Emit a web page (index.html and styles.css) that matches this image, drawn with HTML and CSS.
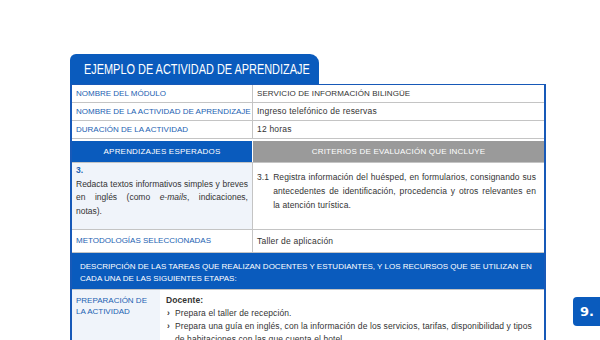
FILE: index.html
```html
<!DOCTYPE html>
<html lang="es">
<head>
<meta charset="utf-8">
<link rel="stylesheet" href="styles.css">
</head>
<body>
<div class="page">
  <div class="sheet">
    <div class="tab"><span class="tab-text">EJEMPLO DE ACTIVIDAD DE APRENDIZAJE</span></div>
    <div class="table">
      <div class="row two">
        <div class="cell label">NOMBRE DEL MÓDULO</div>
        <div class="cell value caps">SERVICIO DE INFORMACIÓN BILINGÜE</div>
      </div>
      <div class="row two">
        <div class="cell label">NOMBRE DE LA ACTIVIDAD DE APRENDIZAJE</div>
        <div class="cell value">Ingreso telefónico de reservas</div>
      </div>
      <div class="row two">
        <div class="cell label">DURACIÓN DE LA ACTIVIDAD</div>
        <div class="cell value">12 horas</div>
      </div>
      <div class="row two heads">
        <div class="cell head blue">APRENDIZAJES ESPERADOS</div>
        <div class="cell head gray">CRITERIOS DE EVALUACIÓN QUE INCLUYE</div>
      </div>
      <div class="row two">
        <div class="cell tint learn">
          <div class="num">3.</div>
          <p class="lines">
            <span class="jl">Redacta textos informativos simples y breves</span>
            <span class="jl">en inglés (como <em>e-mails</em>, indicaciones,</span>
            <span class="ll">notas).</span>
          </p>
        </div>
        <div class="cell crit">
          <span class="cnum">3.1</span>
          <p class="lines">
            <span class="jl">Registra información del huésped, en formularios, consignando sus</span>
            <span class="jl">antecedentes de identificación, procedencia y otros relevantes en</span>
            <span class="ll">la atención turística.</span>
          </p>
        </div>
      </div>
      <div class="row two meth">
        <div class="cell label">METODOLOGÍAS SELECCIONADAS</div>
        <div class="cell value">Taller de aplicación</div>
      </div>
      <div class="row desc">DESCRIPCIÓN DE LAS TAREAS QUE REALIZAN DOCENTES Y ESTUDIANTES, Y LOS RECURSOS QUE SE UTILIZAN EN CADA UNA DE LAS SIGUIENTES ETAPAS:</div>
      <div class="row prep">
        <div class="cell label tint plabel">PREPARACIÓN DE LA ACTIVIDAD</div>
        <div class="cell pbody">
          <div class="who">Docente:</div>
          <ul class="list">
            <li>Prepara el taller de recepción.</li>
            <li>Prepara una guía en inglés, con la información de los servicios, tarifas, disponibilidad y tipos de habitaciones con las que cuenta el hotel.</li>
          </ul>
        </div>
      </div>
    </div>
  </div>
  <div class="badge">9.</div>
</div>
</body>
</html>
```

FILE: styles.css
```css
html, body {
  margin: 0;
  padding: 0;
  background: #fff;
}
body {
  width: 600px;
  height: 340px;
  overflow: hidden;
  font-family: "Liberation Sans", Arial, sans-serif;
  color: #333;
}
.page {
  position: relative;
  width: 600px;
  height: 340px;
  padding: 54px 0 0 70px;
  box-sizing: border-box;
}
.sheet {
  width: 476px;
}
.tab {
  width: 249px;
  height: 30px;
  box-sizing: border-box;
  background: #0a5bbd;
  color: #fff;
  border-radius: 6px 9px 0 0;
  padding-left: 14px;
  white-space: nowrap;
  overflow: hidden;
}
.tab-text {
  display: inline-block;
  font-size: 14px;
  line-height: 30px;
  transform: scaleX(0.78);
  transform-origin: left center;
}
.table {
  border-left: 2px solid #1759b8;
  border-right: 2px solid #1759b8;
  border-top: 1px solid #1759b8;
}
.row {
  border-bottom: 1px solid #c4c4c4;
}
.two {
  display: grid;
  grid-template-columns: 180px 1fr;
}
.cell {
  font-size: 8.5px;
  padding: 0 4px;
  line-height: 17px;
  white-space: nowrap;
}
.label {
  color: #2362b2;
  font-size: 8px;
}
.value {
  border-left: 1px solid #c4c4c4;
  letter-spacing: 0.2px;
}
.value.caps {
  font-size: 8px;
  letter-spacing: 0.1px;
}
.heads {
  border-top: 2px solid #fff;
}
.head {
  color: #fff;
  text-align: center;
  line-height: 21px;
  font-size: 8px;
  letter-spacing: 0.2px;
}
.blue { background: #0a5bbd; }
.gray { background: #9a9a9a; border-left: 1px solid #fff; }
.tint { background: #f0f4fa; }
.learn {
  padding: 1px 4px 11px 4px;
  line-height: 13.5px;
}
.num {
  color: #2362b2;
  font-weight: bold;
}
.lines {
  margin: 0;
  flex: 1;
  min-width: 0;
}
.jl {
  display: block;
  text-align: justify;
  text-align-last: justify;
}
.ll {
  display: block;
}
.crit {
  border-left: 1px solid #c4c4c4;
  display: flex;
  gap: 4px;
  padding: 7px 8px 0 4px;
  line-height: 14px;
  letter-spacing: 0.1px;
}
.cnum { flex: none; }
.meth .cell {
  line-height: 22px;
}
.desc {
  background: #0a5bbd;
  color: #fff;
  font-size: 8px;
  line-height: 12px;
  padding: 8px 8px 4px 8px;
}
.prep {
  display: grid;
  grid-template-columns: 88px 1fr;
  border-bottom: none;
}
.plabel {
  padding: 5px 4px;
  line-height: 11px;
  height: 60px;
  white-space: normal;
}
.pbody {
  padding: 4px 10px 0 6px;
  line-height: 13px;
  letter-spacing: 0.1px;
  white-space: normal;
}
.who {
  font-weight: bold;
}
.list {
  margin: 0;
  padding: 0;
  list-style: none;
}
.list li {
  position: relative;
  padding-left: 9px;
}
.list li::before {
  content: "›";
  position: absolute;
  left: 1px;
  top: 0;
  font-weight: bold;
}
.badge {
  position: absolute;
  left: 573px;
  top: 297px;
  width: 32px;
  height: 29px;
  background: #0a5bbd;
  color: #fff;
  border-radius: 4px;
  font-family: "DejaVu Sans", sans-serif;
  font-weight: bold;
  font-size: 13px;
  line-height: 29px;
  padding-left: 7px;
  box-sizing: border-box;
}
```
